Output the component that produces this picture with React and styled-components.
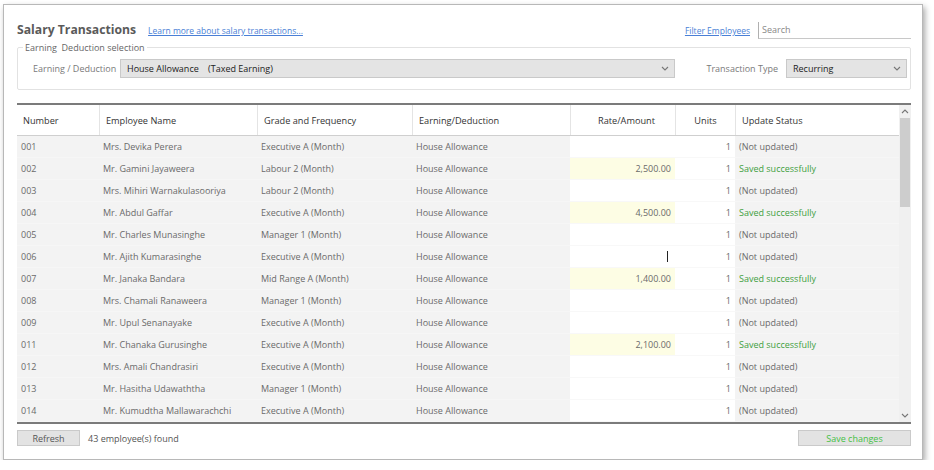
import React from 'react';
import styled, { createGlobalStyle } from 'styled-components';

const GlobalStyle = createGlobalStyle`
  html, body {
    margin: 0;
    padding: 0;
    background: #ffffff;
  }
  body {
    font-family: "Open Sans", "Noto Sans", Arial, sans-serif;
    color: #555;
  }
`;

const rows = [
  { id: '001', name: 'Mrs. Devika Perera', grade: 'Executive A (Month)', rate: '', saved: false },
  { id: '002', name: 'Mr. Gamini Jayaweera', grade: 'Labour 2 (Month)', rate: '2,500.00', saved: true },
  { id: '003', name: 'Mrs. Mihiri Warnakulasooriya', grade: 'Labour 2 (Month)', rate: '', saved: false },
  { id: '004', name: 'Mr. Abdul Gaffar', grade: 'Executive A (Month)', rate: '4,500.00', saved: true },
  { id: '005', name: 'Mr. Charles Munasinghe', grade: 'Manager 1 (Month)', rate: '', saved: false },
  { id: '006', name: 'Mr. Ajith Kumarasinghe', grade: 'Executive A (Month)', rate: '', saved: false, editing: true },
  { id: '007', name: 'Mr. Janaka Bandara', grade: 'Mid Range A (Month)', rate: '1,400.00', saved: true },
  { id: '008', name: 'Mrs. Chamali Ranaweera', grade: 'Manager 1 (Month)', rate: '', saved: false },
  { id: '009', name: 'Mr. Upul Senanayake', grade: 'Executive A (Month)', rate: '', saved: false },
  { id: '011', name: 'Mr. Chanaka Gurusinghe', grade: 'Executive A (Month)', rate: '2,100.00', saved: true },
  { id: '012', name: 'Mrs. Amali Chandrasiri', grade: 'Executive A (Month)', rate: '', saved: false },
  { id: '013', name: 'Mr. Hasitha Udawaththa', grade: 'Manager 1 (Month)', rate: '', saved: false },
  { id: '014', name: 'Mr. Kumudtha Mallawarachchi', grade: 'Executive A (Month)', rate: '', saved: false },
];

const Chevron = ({ up }) => (
  <svg width="8" height="5" viewBox="0 0 8 5">
    <polyline
      points={up ? '1,4 4,1 7,4' : '1,1 4,4 7,1'}
      fill="none"
      stroke="#777"
      strokeWidth="1.1"
    />
  </svg>
);

const SalaryTransactions = () => {
  return (
    <Window>
      <GlobalStyle />
      <TopBar>
        <Title>Salary Transactions</Title>
        <Link>Learn more about salary transactions...</Link>
        <Spacer />
        <Link>Filter Employees</Link>
        <SearchBox>Search</SearchBox>
      </TopBar>

      <Group>
        <Legend>Earning&nbsp; Deduction selection</Legend>
        <GroupRow>
          <FieldLabel>Earning / Deduction</FieldLabel>
          <Select wide>
            <span>House Allowance&nbsp;&nbsp;&nbsp; (Taxed Earning)</span>
            <Chevron />
          </Select>
          <FieldLabel push>Transaction Type</FieldLabel>
          <Select>
            <span>Recurring</span>
            <Chevron />
          </Select>
        </GroupRow>
      </Group>

      <Grid>
        <GridBody>
          <HeaderRow>
            <HeaderCell>Number</HeaderCell>
            <HeaderCell>Employee Name</HeaderCell>
            <HeaderCell>Grade and Frequency</HeaderCell>
            <HeaderCell>Earning/Deduction</HeaderCell>
            <HeaderCell align="right">Rate/Amount</HeaderCell>
            <HeaderCell align="center">Units</HeaderCell>
            <HeaderCell>Update Status</HeaderCell>
          </HeaderRow>
          {rows.map(row => (
            <DataRow key={row.id}>
              <Cell>{row.id}</Cell>
              <Cell>{row.name}</Cell>
              <Cell>{row.grade}</Cell>
              <Cell>House Allowance</Cell>
              <Cell kind={row.saved ? 'highlight' : 'white'} align="right">
                {row.rate}
                {row.editing && <Caret />}
              </Cell>
              <Cell kind="white" align="right">1</Cell>
              <Cell status={row.saved ? 'ok' : 'none'}>
                {row.saved ? 'Saved successfully' : '(Not updated)'}
              </Cell>
            </DataRow>
          ))}
        </GridBody>
        <ScrollBar>
          <ScrollArrow><Chevron up /></ScrollArrow>
          <ScrollThumb />
          <ScrollTrack />
          <ScrollArrow><Chevron /></ScrollArrow>
        </ScrollBar>
      </Grid>

      <BottomBar>
        <Button>Refresh</Button>
        <FoundText>43 employee(s) found</FoundText>
        <Spacer />
        <Button save>Save changes</Button>
      </BottomBar>
    </Window>
  );
};

const Window = styled.div`
  box-sizing: border-box;
  margin: 4px 0 0 3px;
  width: 920px;
  height: 456px;
  border: 1px solid #b8b8b8;
  background: #ffffff;
  box-shadow: 2px 3px 6px rgba(0, 0, 0, 0.35);
  padding: 13px 11px 0 13px;
  display: flex;
  flex-direction: column;
`;

const TopBar = styled.div`
  display: flex;
  align-items: center;
  height: 22px;
`;

const Title = styled.div`
  font-size: 12.2px;
  font-weight: 700;
  color: #5a5a5a;
`;

const Link = styled.span`
  font-size: 8.5px;
  color: #4a7fd6;
  text-decoration: underline;
  margin-left: 12px;
  margin-top: 3px;
  cursor: pointer;
`;

const Spacer = styled.div`
  flex: 1;
`;

const SearchBox = styled.div`
  box-sizing: border-box;
  width: 153px;
  height: 17px;
  margin-left: 8px;
  margin-top: 3px;
  border-left: 1px solid #b0b0b0;
  border-bottom: 1px solid #c8c8c8;
  padding-left: 3px;
  font-size: 9px;
  line-height: 15px;
  color: #888;
`;

const Group = styled.fieldset`
  margin: 1px 0 0;
  padding: 0;
  height: 49px;
  box-sizing: border-box;
  border: 1px solid #e2e2e2;
  border-radius: 2px;
`;

const Legend = styled.legend`
  font-size: 9px;
  color: #666;
  padding: 0 2px;
  margin-left: 5px;
`;

const GroupRow = styled.div`
  display: flex;
  align-items: center;
  height: 20px;
  padding: 4px 0 0 15px;
`;

const FieldLabel = styled.span`
  font-size: 9px;
  color: #7a7a7a;
  margin-left: ${({ push }) => (push ? 'auto' : '0')};
  width: ${({ push }) => (push ? 'auto' : '82px')};
  white-space: nowrap;
`;

const Select = styled.div`
  box-sizing: border-box;
  width: ${({ wide }) => (wide ? '555px' : '121px')};
  height: 19px;
  margin: ${({ wide }) => (wide ? '0 0 0 5px' : '0 3px 0 8px')};
  background: #e4e4e4;
  border: 1px solid #c9c9c9;
  display: flex;
  align-items: center;
  justify-content: space-between;
  padding: 0 5px 0 6px;
  font-size: 9px;
  color: #222;
`;

const Grid = styled.div`
  margin-top: 13px;
  display: flex;
  border-top: 2px solid #7b7b7b;
  border-bottom: 2px solid #7b7b7b;
  height: 321px;
  box-sizing: border-box;
`;

const GridBody = styled.div`
  flex: 1;
  display: flex;
  flex-direction: column;
  overflow: hidden;
`;

const columns = '82px 158px 155px 158px 105px 60px 1fr';

const HeaderRow = styled.div`
  display: grid;
  grid-template-columns: ${columns};
  height: 31px;
  flex-shrink: 0;
  box-sizing: border-box;
  border-bottom: 1px solid #cfcfcf;
  background: #ffffff;
`;

const HeaderCell = styled.div`
  display: flex;
  align-items: center;
  justify-content: ${({ align }) =>
    align === 'right' ? 'flex-end' : align === 'center' ? 'center' : 'flex-start'};
  padding: 0 ${({ align }) => (align === 'right' ? '20px' : '6px')} 0 6px;
  font-size: 9.2px;
  color: #333;
  white-space: nowrap;
  & + & {
    border-left: 1px solid #e4e4e4;
  }
`;

const DataRow = styled.div`
  display: grid;
  grid-template-columns: ${columns};
  height: 22px;
  flex-shrink: 0;
`;

const Cell = styled.div`
  display: flex;
  align-items: center;
  justify-content: ${({ align }) => (align === 'right' ? 'flex-end' : 'flex-start')};
  padding: 0 4px;
  font-size: 9px;
  white-space: nowrap;
  color: ${({ status }) => (status === 'ok' ? '#3f9f3f' : '#6a6a6a')};
  background: ${({ kind }) =>
    kind === 'highlight' ? '#fdfde4' : kind === 'white' ? '#ffffff' : '#f3f3f3'};
  border-bottom: 1px solid ${({ kind }) => (kind ? '#f8f8f8' : '#f6f6f6')};
`;

const Caret = styled.span`
  display: inline-block;
  width: 1px;
  height: 11px;
  background: #222;
  margin-right: 3px;
`;

const ScrollBar = styled.div`
  width: 12px;
  display: flex;
  flex-direction: column;
  background: #f0f0f0;
`;

const ScrollArrow = styled.div`
  height: 13px;
  display: flex;
  align-items: center;
  justify-content: center;
`;

const ScrollThumb = styled.div`
  height: 89px;
  margin: 0 1px;
  background: #cdcdcd;
`;

const ScrollTrack = styled.div`
  flex: 1;
`;

const BottomBar = styled.div`
  display: flex;
  align-items: center;
  margin-top: 6px;
  height: 16px;
`;

const Button = styled.button`
  box-sizing: border-box;
  width: ${({ save }) => (save ? '113px' : '63px')};
  height: 16px;
  padding: 0;
  background: #e3e3e3;
  border: 1px solid #cacaca;
  font-family: inherit;
  font-size: 9px;
  color: ${({ save }) => (save ? '#45c045' : '#555')};
  cursor: pointer;
`;

const FoundText = styled.span`
  font-size: 9px;
  color: #555;
  margin-left: 8px;
`;

export default SalaryTransactions;
